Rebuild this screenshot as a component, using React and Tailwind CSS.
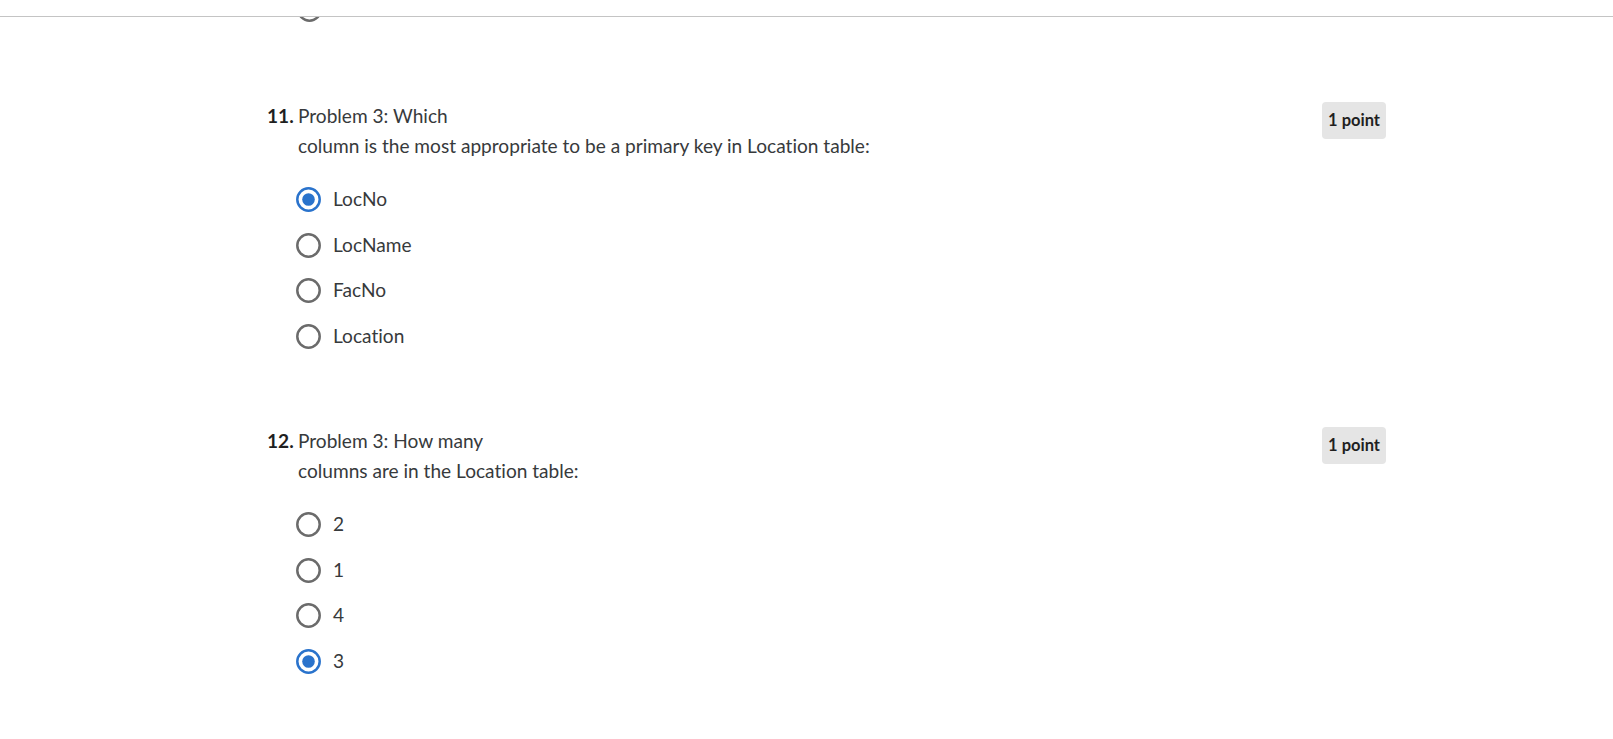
import React from 'react';

const questions = [
  {
    num: '11.',
    lines: ['Problem 3: Which', 'column is the most appropriate to be a primary key in Location table:'],
    options: ['LocNo', 'LocName', 'FacNo', 'Location'],
    selected: 0,
  },
  {
    num: '12.',
    lines: ['Problem 3: How many', 'columns are in the Location table:'],
    options: ['2', '1', '4', '3'],
    selected: 3,
  },
];

function Radio({ checked }) {
  return (
    <svg width="25" height="25" viewBox="0 0 25 25" className="shrink-0">
      <circle
        cx="12.5"
        cy="12.5"
        r="11.2"
        fill="#fff"
        stroke={checked ? '#2a73cc' : '#6b6b6b'}
        strokeWidth="2.5"
      />
      {checked && <circle cx="12.5" cy="12.5" r="6.3" fill="#2a73cc" />}
    </svg>
  );
}

function Question({ q }) {
  return (
    <div className="flex justify-between">
      <div className="flex">
        <span className="w-[31px] text-[19.1px] leading-[30px] font-bold text-[#1f1f1f]">{q.num}</span>
        <div>
          {q.lines.map((line) => (
            <p key={line} className="text-[19.1px] leading-[30px] text-[#373a3c]">
              {line}
            </p>
          ))}
          {/* answer choices */}
          <div className="mt-[16px]">
            {q.options.map((opt, i) => (
              <label key={opt} className="flex items-center h-[45.5px] gap-[12px] -ml-[2px] cursor-pointer">
                <Radio checked={i === q.selected} />
                <span className="text-[19.1px] text-[#373a3c]">{opt}</span>
              </label>
            ))}
          </div>
        </div>
      </div>
      <span className="h-[37px] mt-[1px] px-[6px] flex items-center rounded-[4px] bg-[#e5e5e5] text-[16.5px] font-bold text-[#1f1f1f]">
        1 point
      </span>
    </div>
  );
}

export default function App() {
  return (
    <div className="min-h-screen bg-white font-['Lato',sans-serif] [font-variant-ligatures:none]">
      {/* sticky top bar edge */}
      <div className="h-[17px] border-b border-[#c4c4c4] bg-white" />
      {/* tail of the previous question's last choice */}
      <div className="h-[6px] overflow-hidden pl-[297px]">
        <div className="-mt-[20px]">
          <Radio checked={false} />
        </div>
      </div>

      <div className="ml-[267px] w-[1119px] mt-[78px] flex flex-col gap-[67px]">
        {questions.map((q) => (
          <Question key={q.num} q={q} />
        ))}
      </div>
    </div>
  );
}
